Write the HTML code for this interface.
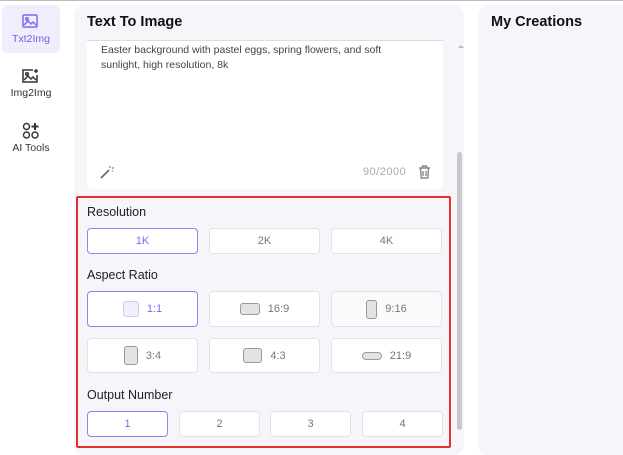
<!DOCTYPE html><html><head><style>
*{box-sizing:border-box;margin:0;padding:0}
body{width:623px;height:450px;overflow:hidden;background:#fff;font-family:"Liberation Sans",sans-serif;position:relative;border-top:1px solid #bbb}
.a{position:absolute}
.side{left:2px;width:58px;text-align:center;font-size:10.5px;color:#333}
.btn{position:absolute;background:#fff;border:1px solid #e2e2e8;border-radius:4px;font-size:11px;color:#777;display:flex;align-items:center;justify-content:center;gap:8px}
.sel{border-color:#8f83f0;color:#7b6cf0}
.lbl{position:absolute;left:87px;font-size:12.5px;color:#222}
.ic{background:#e3e3e6;border:1px solid #999;border-radius:3px}
</style></head><body>
<div class="a" style="left:2px;top:4px;width:58px;height:48px;background:#f0eefc;border-radius:6px"></div>
<svg class="a" style="left:22px;top:12px" width="18" height="16" viewBox="0 0 18 16" fill="none" stroke="#7b6cf0" stroke-width="1.5"><rect x="1" y="2" width="14" height="12" rx="1"/><path d="M2 12l4-4 3 3 2-2 3 3"/><circle cx="5" cy="6" r="1.3"/></svg>
<div class="a side" style="top:32px;color:#6e5ff0">Txt2Img</div>
<svg class="a" style="left:22px;top:67px" width="18" height="16" viewBox="0 0 18 16" fill="none" stroke="#333" stroke-width="1.5"><path d="M11 2H1v12h14V7"/><path d="M2 12l4-4 3 3 2-2 3 3"/><circle cx="5" cy="6" r="1.3"/><path d="M14 1v4M12 3h4"/></svg>
<div class="a side" style="top:86px">Img2Img</div>
<svg class="a" style="left:22px;top:121px" width="18" height="18" viewBox="0 0 18 18" fill="none" stroke="#333" stroke-width="1.4"><circle cx="4.5" cy="4.5" r="3"/><circle cx="4.5" cy="13" r="3"/><circle cx="13" cy="13" r="3"/><path d="M13 1v7M9.5 4.5h7" stroke-width="2"/></svg>
<div class="a side" style="top:141px">AI Tools</div>
<div class="a" style="left:74px;top:4px;width:390px;height:450px;background:#f5f5fa;border-radius:10px"></div>
<div class="a" style="left:87px;top:13px;font-size:14.5px;font-weight:bold;color:#111">Text To Image</div>
<div class="a" style="left:87px;top:39px;width:356px;height:1px;background:#ddd"></div>
<div class="a" style="left:87px;top:40px;width:356px;height:148px;background:#fff;border-radius:0 0 6px 6px"></div>
<div class="a" style="left:101px;top:42px;font-size:10.5px;line-height:14.5px;color:#444;width:300px">Easter background with pastel eggs, spring flowers, and soft sunlight, high resolution, 8k</div>
<svg class="a" style="left:100px;top:164px" width="15" height="14" viewBox="0 0 15 14" stroke="#666" stroke-width="1.6" fill="none"><path d="M1 13l8-8"/><path d="M10 1v2M12 3h2M12 6h1" stroke-width="1"/></svg>
<div class="a" style="left:363px;top:165px;font-size:11px;color:#aaa;letter-spacing:.5px">90/2000</div>
<svg class="a" style="left:418px;top:164px" width="13" height="14" viewBox="0 0 13 14" fill="none" stroke="#888" stroke-width="1.4"><path d="M1 3h11M4.5 3V1h4v2M2.5 3l.7 10h6.6l.7-10M5 6v5M8 6v5"/></svg>
<div class="a" style="left:458px;top:44px;width:0;height:0;border-left:3px solid transparent;border-right:3px solid transparent;border-bottom:3px solid #bbb"></div>
<div class="a" style="left:457px;top:151px;width:5px;height:278px;background:#c8c8cc;border-radius:3px"></div>
<div class="a" style="left:76px;top:195px;width:375px;height:252px;border:2px solid #e8302f;border-radius:2px"></div>
<div class="lbl" style="top:204px">Resolution</div>
<div class="btn sel" style="left:87px;top:227px;width:111px;height:26px">1K</div>
<div class="btn" style="left:209px;top:227px;width:111px;height:26px">2K</div>
<div class="btn" style="left:331px;top:227px;width:111px;height:26px">4K</div>
<div class="lbl" style="top:267px">Aspect Ratio</div>
<div class="btn sel" style="left:87px;top:290px;width:111px;height:36px"><span class="ic" style="width:16px;height:16px;background:#f1effd;border-color:#cfc8f8"></span>1:1</div>
<div class="btn" style="left:209px;top:290px;width:111px;height:36px"><span class="ic" style="width:20px;height:12px"></span>16:9</div>
<div class="btn" style="left:331px;top:290px;width:111px;height:36px;background:#fafafa"><span class="ic" style="width:11px;height:19px"></span>9:16</div>
<div class="btn" style="left:87px;top:337px;width:111px;height:35px"><span class="ic" style="width:14px;height:19px"></span>3:4</div>
<div class="btn" style="left:209px;top:337px;width:111px;height:35px"><span class="ic" style="width:19px;height:15px"></span>4:3</div>
<div class="btn" style="left:331px;top:337px;width:111px;height:35px"><span class="ic" style="width:20px;height:8px;border-radius:4px"></span>21:9</div>
<div class="lbl" style="top:387px">Output Number</div>
<div class="btn sel" style="left:87px;top:410px;width:81px;height:26px">1</div>
<div class="btn" style="left:179px;top:410px;width:81px;height:26px">2</div>
<div class="btn" style="left:270px;top:410px;width:81px;height:26px">3</div>
<div class="btn" style="left:362px;top:410px;width:81px;height:26px">4</div>
<div class="a" style="left:478px;top:4px;width:160px;height:450px;background:#f5f5fa;border-radius:10px"></div>
<div class="a" style="left:491px;top:13px;font-size:14.5px;font-weight:bold;color:#111">My Creations</div>
</body></html>
